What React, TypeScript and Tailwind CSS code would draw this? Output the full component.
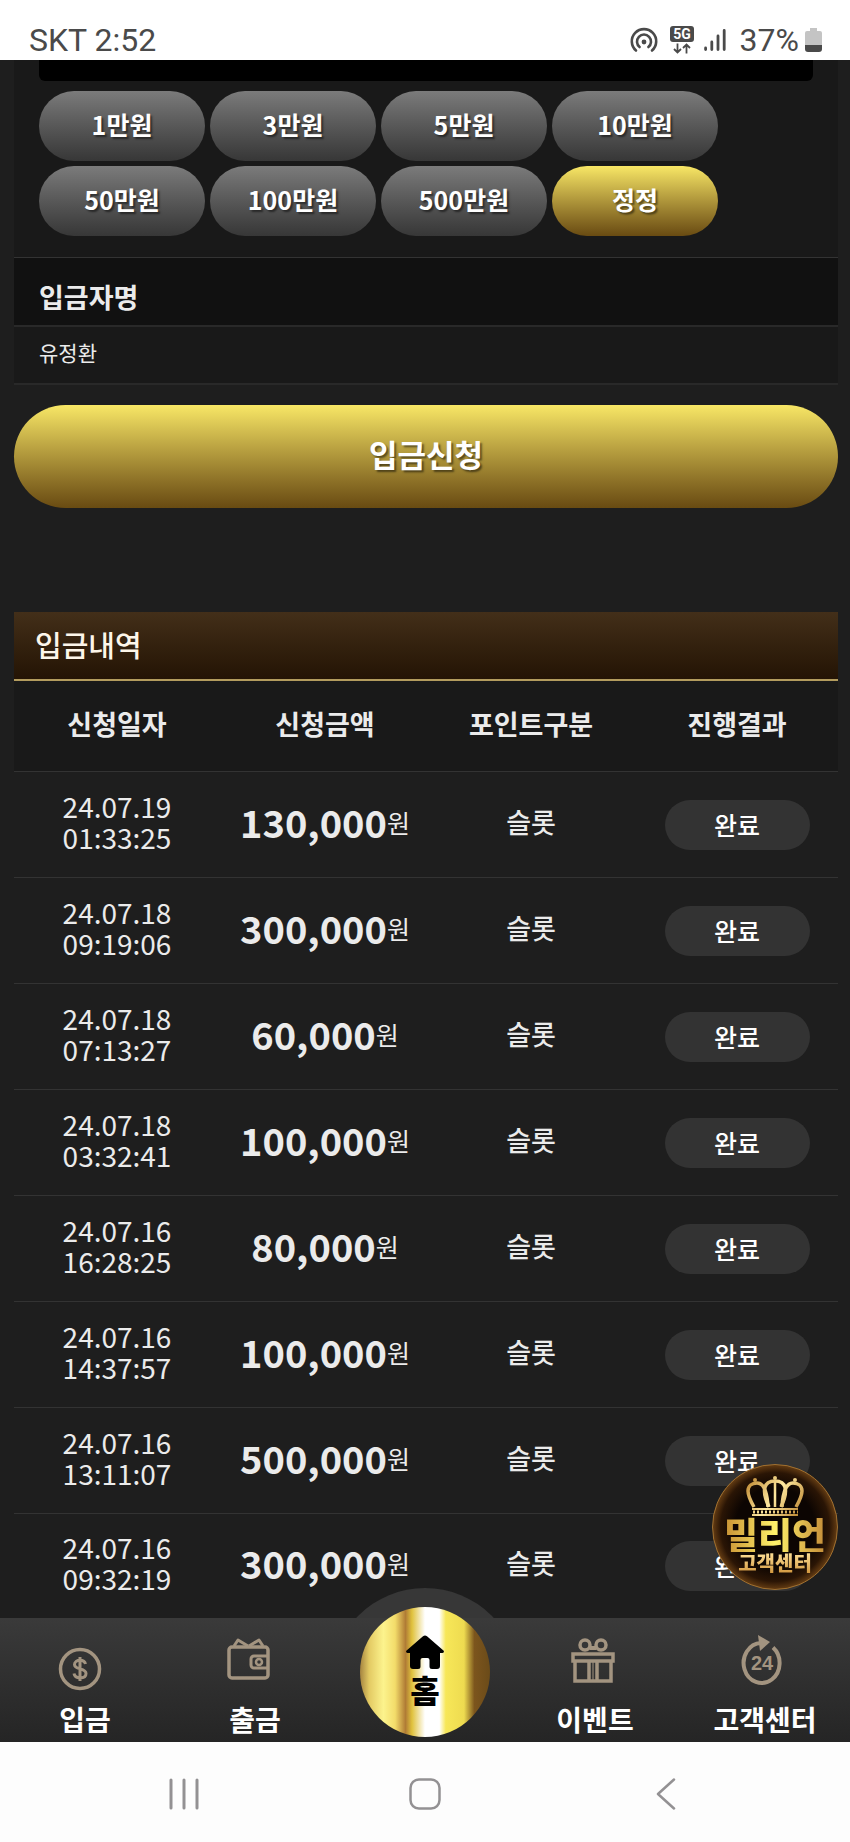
import React, { useState } from 'react';

interface Deposit {
    date: string;
    time: string;
    amount: number;
}

const AMOUNTS = [1, 3, 5, 10, 50, 100, 500];

const COLUMNS = ['신청일자', '신청금액', '포인트구분', '진행결과'];

const DEPOSITS: Deposit[] = [
    { date: '24.07.19', time: '01:33:25', amount: 130000 },
    { date: '24.07.18', time: '09:19:06', amount: 300000 },
    { date: '24.07.18', time: '07:13:27', amount: 60000 },
    { date: '24.07.18', time: '03:32:41', amount: 100000 },
    { date: '24.07.16', time: '16:28:25', amount: 80000 },
    { date: '24.07.16', time: '14:37:57', amount: 100000 },
    { date: '24.07.16', time: '13:11:07', amount: 500000 },
    { date: '24.07.16', time: '09:32:19', amount: 300000 },
];

const StatusBar: React.FC = () => (
    <header className="h-[60px] bg-white text-[#4a4a4a] flex items-center justify-between pt-5 pl-[29px] pr-7 font-['Roboto',sans-serif] text-[32px] leading-9">
        <span>SKT 2:52</span>
        <div className="flex items-center">
            <svg className="w-7 h-7 mr-3" viewBox="0 0 28 28" fill="none" stroke="currentColor" strokeWidth="2.6" strokeLinecap="round">
                <path d="M6 24.5A12.2 12.2 0 1 1 22 24.5" />
                <path d="M9.6 21A7 7 0 1 1 18.4 21" />
                <circle cx="14" cy="16" r="2.4" fill="currentColor" stroke="none" />
            </svg>
            <svg className="w-6 h-7 mr-[10px]" viewBox="0 0 24 28">
                <rect width="24" height="16" rx="3" fill="currentColor" />
                <text x="12" y="13" textAnchor="middle" fontSize="14" fontWeight="700" fill="#fff">5G</text>
                <path d="M7.5 17.5v9M4 23l3.5 3.5L11 23M16.5 27.5v-9M13 22l3.5-3.5L20 22" fill="none" stroke="currentColor" strokeWidth="1.8" />
            </svg>
            <svg className="w-[22px] h-6 mr-[14px]" viewBox="0 0 22 24" stroke="currentColor" strokeWidth="2.8" strokeLinecap="round">
                <path d="M1.6 20v1.5M7.8 14v7.5M14 8v13.5M20.2 2.5v19" />
            </svg>
            <span>37%</span>
            <svg className="w-[17px] h-6 ml-[6px]" viewBox="0 0 17 24">
                <path d="M5 0h7v3h3a2 2 0 0 1 2 2v12H0V5a2 2 0 0 1 2-2h3z" fill="#c4c4c4" />
                <path d="M0 17h17v4a3 3 0 0 1-3 3H3a3 3 0 0 1-3-3z" fill="#4a4a4a" />
            </svg>
        </div>
    </header>
);

const CoinIcon = () => (
    <svg className="w-12 h-[60px]" viewBox="0 0 48 60" fill="none" stroke="#a39480" strokeWidth="3.5">
        <circle cx="23" cy="37" r="19.5" />
        <path d="M28.5 32c-.6-2.7-2.6-3.8-5.5-3.8s-5.5 1.6-5.5 4.3c0 6 11.5 2.8 11.5 9 0 2.8-2.4 4.4-6 4.4-3.2 0-5.5-1.4-6-4.3M23 25v24" strokeWidth="3" />
    </svg>
);

const WalletIcon = () => (
    <svg className="w-12 h-[60px]" viewBox="0 0 48 60" fill="none" stroke="#a39480" strokeWidth="3.5" strokeLinejoin="round">
        <rect x="2" y="15" width="39" height="31" rx="3" />
        <path d="M7 14l4-6 10 6M36 14l-4-6-10 6" strokeWidth="3" />
        <path d="M40 24H27a3 3 0 0 0-3 3v6a3 3 0 0 0 3 3h13" strokeWidth="3" />
        <circle cx="32" cy="30" r="3" strokeWidth="2.5" />
    </svg>
);

const GiftIcon = () => (
    <svg className="w-12 h-[60px]" viewBox="0 0 48 60" fill="none" stroke="#a39480" strokeWidth="3.5">
        <circle cx="18" cy="13" r="5" />
        <circle cx="34" cy="13" r="5" />
        <path d="M23 16h6" strokeWidth="4" />
        <path d="M6 22h40v7H6zM8 29v20h36V29M22 29v20M30 29v20" />
        <path d="M26 30v18" strokeWidth="1" />
    </svg>
);

const SupportIcon = () => (
    <svg className="w-12 h-[60px]" viewBox="0 0 48 60" fill="none" stroke="#a39480">
        <path d="M36 15.5A18 20 0 1 1 24 11" strokeWidth="4" />
        <path d="M21 3l12 7-10 9z" fill="#a39480" stroke="none" />
        <text x="25" y="38" textAnchor="middle" fontSize="20" fontWeight="700" fill="#a39480" stroke="none" fontFamily="Liberation Sans">24</text>
    </svg>
);

const CrownIcon = () => (
    <svg className="w-[58px] h-10" viewBox="0 0 58 40" fill="none" stroke="url(#crown-gold)" strokeWidth="3.5">
        <defs>
            <linearGradient id="crown-gold" x1="0" y1="0" x2="58" y2="40" gradientUnits="userSpaceOnUse">
                <stop offset="0" stopColor="#b98028" />
                <stop offset="0.5" stopColor="#ffe9a0" />
                <stop offset="1" stopColor="#b47a24" />
            </linearGradient>
        </defs>
        <path d="M8 31C4 24 2 19 2 15c0-5 4-8 9-8 6 0 10 6 11 24" />
        <path d="M50 31c4-7 6-12 6-16 0-5-4-8-9-8-6 0-10 6-11 24" />
        <path d="M23 31C15 14 18 5 29 5s14 9 6 26" />
        <path d="M29 5v26" strokeWidth="2.5" />
        <circle cx="29" cy="2" r="1" strokeWidth="2" />
        <circle cx="9" cy="4" r="1" strokeWidth="2" />
        <circle cx="49" cy="4" r="1" strokeWidth="2" />
        <path d="M6 33h46M6 39h46" strokeWidth="2" />
        <path d="M7 36h45" strokeWidth="3" strokeDasharray="2 2" />
    </svg>
);

const NAV_LEFT = [
    { label: '입금', icon: <CoinIcon /> },
    { label: '출금', icon: <WalletIcon /> },
];

const NAV_RIGHT = [
    { label: '이벤트', icon: <GiftIcon /> },
    { label: '고객센터', icon: <SupportIcon /> },
];

const NavItem: React.FC<{ label: string; icon: React.ReactNode }> = ({ label, icon }) => (
    <a href="#" className="relative flex flex-col items-center pt-[14px] text-white text-[28px] leading-[46px] font-bold whitespace-nowrap">
        <span className="mr-2 h-16">{icon}</span>
        <span>{label}</span>
    </a>
);

const App: React.FC = () => {
    const [amount, setAmount] = useState(0);
    const [name, setName] = useState('유정환');

    return (
        <div className="min-h-screen flex flex-col bg-[#1e1e1e] text-[#ebebeb] font-['Noto_Sans_CJK_KR',sans-serif]">
            <StatusBar />

            <main className="relative flex-1 pl-[14px] pr-3">
                <form onSubmit={e => e.preventDefault()}>
                    <div className="bg-[#191919] px-[25px] pb-[21px] border-b border-[#333]">
                        <input
                            aria-label="입금금액"
                            readOnly
                            value={amount ? amount.toLocaleString() : ''}
                            className="block w-full h-[21px] bg-black rounded-b-md px-3 text-sm outline-none"
                        />
                        <div className="mt-[10px] flex flex-wrap gap-[5px]">
                            {AMOUNTS.map(n => (
                                <button
                                    key={n}
                                    type="button"
                                    onClick={() => setAmount(amount + n * 10000)}
                                    className="w-[166px] h-[70px] pb-1 rounded-full bg-linear-to-b from-[#7b7b7b] to-[#373737] text-white text-[25px] leading-8 font-bold [text-shadow:2px_2px_2px_rgba(0,0,0,0.5)]"
                                >
                                    {n}만원
                                </button>
                            ))}
                            <button
                                type="button"
                                onClick={() => setAmount(0)}
                                className="w-[166px] h-[70px] pb-1 rounded-full bg-linear-to-b from-[#f8e766] to-[#694b12] text-white text-[25px] leading-8 font-bold [text-shadow:2px_2px_2px_rgba(0,0,0,0.5)]"
                            >
                                정정
                            </button>
                        </div>
                    </div>
                    <label htmlFor="depositor" className="flex items-center h-[69px] pt-[10px] px-[25px] bg-[#111] border-b-2 border-[#292929] text-[27px] leading-8 font-bold">
                        입금자명
                    </label>
                    <div className="bg-[#191919] border-b-2 border-[#292929]">
                        <input
                            id="depositor"
                            value={name}
                            onChange={e => setName(e.target.value)}
                            className="block w-full h-14 px-[25px] pb-[6px] bg-transparent text-[21px] outline-none"
                        />
                    </div>
                    <button
                        type="submit"
                        className="mt-5 w-full h-[103px] pb-[6px] rounded-full bg-linear-to-b from-[#f8e766] to-[#694b12] text-white text-[31px] leading-10 font-bold [text-shadow:2px_2px_2px_rgba(0,0,0,0.5)]"
                    >
                        입금신청
                    </button>
                </form>

                {/* Deposit history */}
                <section className="mt-[104px]">
                    <h2 className="flex items-center h-[69px] px-[21px] pb-1 bg-linear-to-b from-[#432f19] to-[#241405] border-b-2 border-[#b39c5e] text-[#fdf6ea] text-[29px] leading-9 font-medium">
                        입금내역
                    </h2>
                    <table className="w-full table-fixed text-center text-[27px] leading-8">
                        <thead>
                            <tr className="h-[90px] bg-[#191919] border-b border-[#333]">
                                {COLUMNS.map(c => (
                                    <th key={c} className="pb-1 not-first:pl-1 font-bold">{c}</th>
                                ))}
                            </tr>
                        </thead>
                        <tbody>
                            {DEPOSITS.map(d => (
                                <tr key={d.date + d.time} className="h-[106px] border-b border-[#333] last:h-[104px] last:border-b-0">
                                    <td className="pb-1 text-[28px] leading-[31px]">
                                        {d.date}<br />{d.time}
                                    </td>
                                    <td className="pl-1 pb-1">
                                        <div className="flex items-center justify-center text-[25px]">
                                            <b className="text-[38px]">{d.amount.toLocaleString('en-US')}</b>원
                                        </div>
                                    </td>
                                    <td className="pl-1 pb-1 font-medium">슬롯</td>
                                    <td className="pl-1">
                                        <span className="mx-auto mt-[2px] flex items-center justify-center w-[145px] h-[50px] pb-[2px] rounded-full bg-[#333] text-white text-[25px] font-medium">
                                            완료
                                        </span>
                                    </td>
                                </tr>
                            ))}
                        </tbody>
                    </table>
                </section>

                {/* Floating support badge */}
                <a
                    href="#"
                    className="absolute right-3 bottom-7 z-10 size-[126px] rounded-full border border-[#a07030] bg-[radial-gradient(circle,#0c0502_45%,#2a1505_62%,#6a4014_72%)] flex flex-col items-center pt-[11px]"
                >
                    <CrownIcon />
                    <span className="bg-linear-to-r from-[#c89234] via-[#fff26a] to-[#c48c38] bg-clip-text text-transparent text-[37px] leading-[36px] font-black whitespace-nowrap">밀리언</span>
                    <span className="bg-linear-to-b from-[#ffe39a] to-[#d1953a] bg-clip-text text-transparent text-[20px] leading-[22px] font-black whitespace-nowrap">고객센터</span>
                </a>
            </main>

            <nav className="relative h-[124px] grid grid-cols-5 bg-linear-to-b from-[#3a3a3a] to-[#252525]">
                <div className="absolute inset-x-0 -top-[30px] h-[30px] overflow-hidden">
                    <div className="mx-auto size-[188px] rounded-full bg-[#373737]" />
                </div>
                {NAV_LEFT.map(n => <NavItem key={n.label} {...n} />)}
                <a href="#" className="relative flex justify-center">
                    <span className="absolute -top-[11px] size-[130px] rounded-full flex flex-col items-center pt-7 text-black bg-[linear-gradient(90deg,#a58440_0%,#e3ca63_7%,#fcf38d_18%,#f3dc6a_27%,#b07c35_35%,#e0c23d_40%,#fff_50%,#fff_61%,#f7e758_66%,#eedb50_80%,#7c551d_88%,#6b4b19_100%)]">
                        <svg className="w-[38px] h-[34px]" viewBox="0 0 38 34" fill="currentColor">
                            <path d="M17 1.2Q19 0 21 1.2L38 16q0 2-1.5 2H34v13q0 3-3 3h-5q-2.500 0-2.500-2.500V25q0-2-2-2h-5q-2 0-2 2v6.500Q14.500 34 12 34H7q-3 0-3-3V18H1.500Q0 18 0 16z" />
                        </svg>
                        <span className="mt-1 text-[32px] leading-8 font-black">홈</span>
                    </span>
                </a>
                {NAV_RIGHT.map(n => <NavItem key={n.label} {...n} />)}
            </nav>

            {/* Android navigation */}
            <footer className="h-[100px] bg-[#fdfdfd] grid grid-cols-3 items-center justify-items-center px-16 text-[#939193]">
                <button type="button" aria-label="최근 앱" className="mt-1">
                    <svg className="w-8 h-8" viewBox="0 0 32 32" stroke="currentColor" strokeWidth="3" strokeLinecap="round">
                        <path d="M3 2v28M16 2v28M29 2v28" />
                    </svg>
                </button>
                <button type="button" aria-label="홈 화면" className="mt-1">
                    <svg className="w-8 h-8" viewBox="0 0 32 32" fill="none" stroke="currentColor" strokeWidth="2.5">
                        <rect x="1.5" y="1.5" width="29" height="29" rx="8.5" />
                    </svg>
                </button>
                <button type="button" aria-label="뒤로" className="mt-1">
                    <svg className="w-5 h-8" viewBox="0 0 20 32" fill="none" stroke="currentColor" strokeWidth="2.5" strokeLinecap="round" strokeLinejoin="round">
                        <path d="M18 1.5L2 16l16 14.5" />
                    </svg>
                </button>
            </footer>
        </div>
    );
};

export default App;
